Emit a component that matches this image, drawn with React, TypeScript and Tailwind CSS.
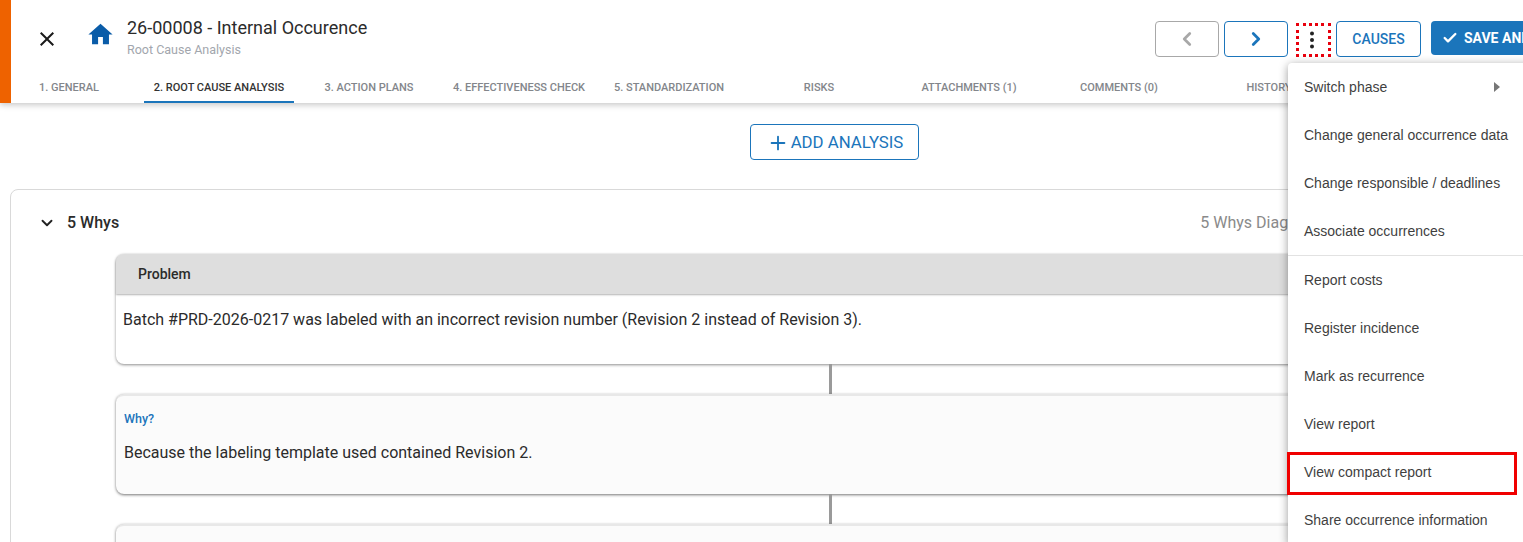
import { ChevronDown, ChevronLeft, ChevronRight, Plus, Check } from "lucide-react"

const tabs = [
  "1. General",
  "2. Root Cause Analysis",
  "3. Action Plans",
  "4. Effectiveness Check",
  "5. Standardization",
  "Risks",
  "Attachments (1)",
  "Comments (0)",
  "History",
]

const menuTop = ["Switch phase", "Change general occurrence data", "Change responsible / deadlines", "Associate occurrences"]
const menuBottom = [
  "Report costs",
  "Register incidence",
  "Mark as recurrence",
  "View report",
  "View compact report",
  "Share occurrence information",
]

function WhyCard({ text }: { text?: string }) {
  return (
    <div className="mx-auto h-[100px] w-[1428px] rounded-lg border-t-2 border-[#e8e8e8] bg-[#fbfbfb] px-[8px] pt-[15px] shadow-[0_1px_3px_rgba(0,0,0,0.55)]">
      <div className="text-[12.5px] font-medium leading-[16px] text-[#1b75bb]">Why?</div>
      <div className="mt-[16px] text-[16px] leading-[20px] text-[#2b2b2b]">{text}</div>
    </div>
  )
}

export default function App() {
  return (
    <div className="relative h-[542px] w-[1523px] overflow-hidden bg-white font-['Roboto',sans-serif]">
      <div className="w-[1668px]">
        {/* HEADER */}
        <div className="flex h-[103px] shadow-[0_2px_6px_rgba(0,0,0,0.22)]">
          <div className="w-[11px] shrink-0 bg-[#ee6200]" />
          <div className="flex-1">
            <div className="flex h-[70px] items-start">
              <svg viewBox="0 0 24 24" className="ml-[24px] mt-[27px] h-[24px] w-[24px] shrink-0 fill-[#1a1a1a]">
                <path d="M19 6.41 17.59 5 12 10.59 6.41 5 5 6.41 10.59 12 5 17.59 6.41 19 12 13.41 17.59 19 19 17.59 13.41 12z" />
              </svg>
              <svg viewBox="0 0 24 24" className="ml-[27px] mt-[20px] h-[29px] w-[29px] shrink-0 fill-[#0a5ca8]">
                <path d="M10 20v-6h4v6h5v-8h3L12 3 2 12h3v8z" />
              </svg>
              <div className="ml-[12px] mt-[16px]">
                <div className="text-[18px] leading-[24px] text-[#2b2b2b]">26-00008 - Internal Occurence</div>
                <div className="mt-[2px] text-[12.5px] leading-[16px] text-[#a2a6ad]">Root Cause Analysis</div>
              </div>
              <div className="ml-auto mr-[8px] mt-[21px] flex items-start">
                <button className="flex h-[36px] w-[64px] items-center justify-center rounded border border-[#a8a8a8] text-[#a8a8a8]">
                  <ChevronLeft size={22} strokeWidth={3} />
                </button>
                <button className="ml-[5px] flex h-[36px] w-[64px] items-center justify-center rounded border border-[#1b75bb] text-[#1b75bb]">
                  <ChevronRight size={22} strokeWidth={3} />
                </button>
                <div className="ml-[8px] mt-[2px] flex h-[34px] w-[35px] items-center justify-center border-[3px] border-dotted border-[#e8000d] pr-[3px]">
                  <svg viewBox="0 0 6 20" className="h-[20px] w-[6px] fill-[#222]">
                    <circle cx="3" cy="3.5" r="2" />
                    <circle cx="3" cy="10" r="2" />
                    <circle cx="3" cy="16.5" r="2" />
                  </svg>
                </div>
                <button className="ml-[5px] h-[36px] w-[85px] rounded border border-[#1b75bb] text-[14px] font-medium text-[#1b75bb]">
                  CAUSES
                </button>
                <button className="ml-[10px] flex h-[34px] w-[229px] items-center rounded bg-[#1b75bb] pl-[11px] text-[14px] font-bold text-white">
                  <Check size={16} strokeWidth={3.5} className="mr-[6px]" />
                  SAVE AND CLOSE
                </button>
              </div>
            </div>
            <div className="flex h-[33px]">
              {tabs.map((tab, i) => (
                <div
                  key={tab}
                  className={`flex shrink-0 items-center justify-center text-[11px] font-medium uppercase ${
                    i === 0 ? "w-[133px] pr-[17px]" : "w-[150px]"
                  } ${i === 1 ? "border-b-2 border-[#1b75bb] pt-[5px] text-[#333]" : "pt-[3px] text-[#83868b]"}`}
                >
                  {tab}
                </div>
              ))}
            </div>
          </div>
        </div>

        {/* ADD ANALYSIS */}
        <div className="flex justify-center pt-[21px]">
          <button className="flex h-[36px] w-[169px] items-center justify-center rounded border border-[#1b75bb] pl-[2px] pt-[1px] text-[16.8px] text-[#1b75bb]">
            <Plus size={22} strokeWidth={2} className="mr-[2px]" />
            ADD ANALYSIS
          </button>
        </div>

        {/* 5 WHYS */}
        <div className="ml-[10px] mt-[29px] h-[400px] w-[1640px] rounded-t-lg border border-[#d9d9d9] pt-[21px]">
          <div className="flex h-[24px] items-center">
            <ChevronDown size={18} strokeWidth={2.5} className="ml-[27px] text-[#222]" />
            <span className="ml-[11px] text-[16px] font-medium text-[#2b2b2b]">5 Whys</span>
            <span className="ml-auto mr-[333px] text-[16px] text-[#8a8a8a]">5 Whys Diagram</span>
          </div>

          <div className="mt-[19px]">
            <div className="mx-auto w-[1428px] rounded-lg bg-white shadow-[0_1px_3px_rgba(0,0,0,0.45)]">
              <div className="flex h-[40px] items-center rounded-t-lg bg-[#dedede] pl-[22px] text-[14px] font-medium text-[#2b2b2b] shadow-[0_1px_2px_rgba(0,0,0,0.3)]">
                Problem
              </div>
              <div className="h-[70px] px-[7px] pt-[16px] text-[16px] leading-[20px] text-[#2b2b2b]">
                Batch #PRD-2026-0217 was labeled with an incorrect revision number (Revision 2 instead of Revision 3).
              </div>
            </div>
            <div className="mx-auto h-[30px] w-[3px] bg-[#9a9a9a]" />
            <WhyCard text="Because the labeling template used contained Revision 2." />
            <div className="mx-auto h-[30px] w-[3px] bg-[#9a9a9a]" />
            <WhyCard />
          </div>
        </div>
      </div>

      {/* MENU */}
      <div className="absolute left-[1288px] top-[63px] w-[260px] rounded-t bg-white font-['Liberation_Sans',sans-serif] text-[14px] text-[#3f3f3f] shadow-[0_2px_10px_rgba(0,0,0,0.4)]">
        {menuTop.map((item, i) => (
          <div key={item} className="flex h-[48px] items-center pl-[16px]">
            {item}
            {i === 0 && <div className="ml-[107px] h-0 w-0 border-y-[5px] border-l-[6px] border-y-transparent border-l-[#777]" />}
          </div>
        ))}
        <div className="h-px bg-[#e2e2e2]" />
        {menuBottom.map((item) => (
          <div key={item} className="flex h-[48px] items-center pl-[16px]">
            {item}
          </div>
        ))}
      </div>

      {/* red highlight over the menu item */}
      <div className="absolute left-[1287px] top-[452px] h-[43px] w-[230px] border-[3px] border-[#f00000]" />
    </div>
  )
}
